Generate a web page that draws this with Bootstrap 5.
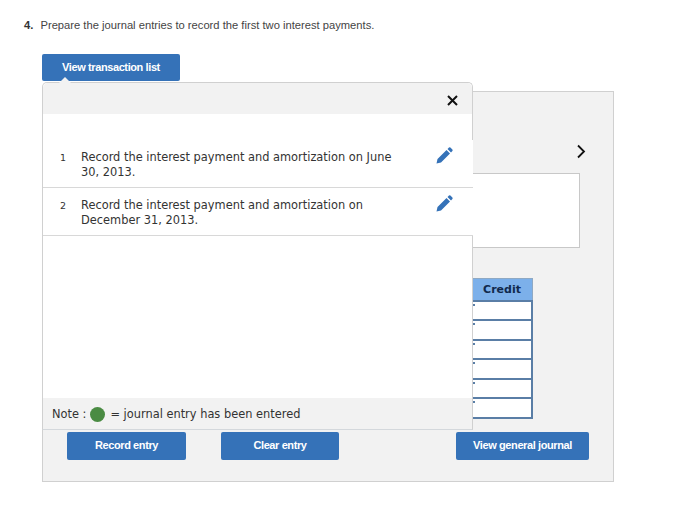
<!DOCTYPE html>
<html lang="en">
<head>
    <meta charset="UTF-8">
    <meta name="viewport" content="width=device-width, initial-scale=1.0">
    <title>Journal entries</title>
    <link href="https://cdn.jsdelivr.net/npm/bootstrap@5.3.0/dist/css/bootstrap.min.css" rel="stylesheet">
    <style>
        body {
            background-color: #fff;
            font-family: "Liberation Sans", Arial, sans-serif;
            color: #444;
            height: 528px;
            overflow: hidden;
        }
        .page-wrap {
            padding: 18px 0 0 24px;
            width: 700px;
        }
        .question {
            font-size: 11.2px;
            line-height: 15px;
            margin: 0 0 21px 0;
        }
        .question b { color: #333; margin-right: 4px; }
        .work-area {
            position: relative;
            margin-left: 18px;
            width: 572px;
        }
        .btn-blue {
            background-color: #3572b8;
            color: #fff;
            border: 0;
            border-radius: 2px;
            font-size: 11px;
            font-weight: 700;
            letter-spacing: -.4px;
            height: 28px;
            padding: 0 0 1px 0;
        }
        .btn-blue:hover { background-color: #3572b8; color: #fff; }
        .btn-list { width: 138px; height: 27px; display: block; }
        .panel-main {
            margin-top: 10px;
            height: 391px;
            background-color: #f2f2f2;
            border: 1px solid #d0d0d0;
            padding: 0 24px 0 24px;
        }
        .next-row {
            height: 81px;
            padding: 52px 3px 0 0;
        }
        .white-box {
            height: 75px;
            background-color: #fff;
            border: 1px solid #c8c8c8;
            margin-right: 9px;
        }
        .entry-table {
            width: 300px;
            margin: 30px 56px 0 auto;
            border-collapse: collapse;
            table-layout: fixed;
        }
        .entry-table th {
            height: 22px;
            background-color: #7cb0ea;
            border: 1px solid #8fa9c4;
            color: #10294d;
            font-family: "DejaVu Sans", sans-serif;
            font-size: 11px;
            font-weight: 700;
            text-align: center;
            padding: 1px 0 0 0;
        }
        .entry-table th.blank-col {
            width: 239px;
            border: 0;
            background: none;
        }
        .entry-table td {
            position: relative;
            height: 19.6px;
            background-color: #fff;
            border: 2px solid #5a7ea6;
            border-left: 0;
            padding: 0;
        }
        .entry-table td:first-child { border-right: 0; }
        .entry-table td:last-child::before {
            content: "";
            position: absolute;
            left: 1px;
            top: 2px;
            width: 2px;
            height: 2px;
            background-color: #5a7ea6;
        }
        .action-row {
            margin-top: 13px;
            margin-right: 0;
        }
        .btn-record { width: 119px; }
        .btn-clear { width: 118px; margin-left: 35px; }
        .btn-journal { width: 133px; margin-left: auto; }
        .popup {
            position: absolute;
            left: 0;
            top: 28px;
            width: 431px;
            height: 348px;
            background-color: #fff;
            border: 1px solid #d0d0d0;
            border-bottom-color: #d4d8dc;
            border-radius: 5px 5px 0 0;
            display: flex;
            flex-direction: column;
            font-family: "DejaVu Sans", sans-serif;
            color: #333;
        }
        .popup::before {
            content: "";
            position: absolute;
            left: 16px;
            top: -6px;
            border-left: 6px solid transparent;
            border-right: 6px solid transparent;
            border-bottom: 6px solid #f2f2f2;
        }
        .popup-head {
            height: 31px;
            background-color: #f2f2f2;
            border-radius: 5px 5px 0 0;
            padding: 0 14px 0 0;
        }
        .popup-list {
            margin-top: 26px;
            flex: 1 1 auto;
        }
        .popup-item {
            display: flex;
            height: 48px;
            padding: 10px 0 0 17px;
            border-bottom: 1px solid #d8d8d8;
            font-size: 11.4px;
            line-height: 15px;
            margin-right: -1px;
            background-color: #fff;
        }
        .item-num { width: 21px; font-size: 9.5px; flex: none; }
        .item-text { width: 325px; flex: none; }
        .item-edit { margin-left: 30px; margin-top: -3px; }
        .popup-note {
            height: 31px;
            background-color: #f2f2f2;
            font-size: 11.4px;
            padding: 2px 0 0 9px;
        }
        .green-dot {
            width: 15px;
            height: 15px;
            border-radius: 50%;
            background-color: #4a8b43;
            margin: -1px 5px 0 4px;
        }
    </style>
</head>
<body>
    <div class="page-wrap">
        <p class="question"><b>4.</b> Prepare the journal entries to record the first two interest payments.</p>

        <div class="work-area">
            <button class="btn btn-blue btn-list">View transaction list</button>

            <div class="panel-main">
                <div class="next-row d-flex justify-content-end">
                    <svg width="10" height="15" viewBox="0 0 10 15"><path d="M2 1.5 L8 7.5 L2 13.5" fill="none" stroke="#111" stroke-width="1.8"/></svg>
                </div>
                <div class="white-box"></div>
                <table class="entry-table">
                    <thead>
                        <tr><th class="blank-col"></th><th>Credit</th></tr>
                    </thead>
                    <tbody>
                        <tr><td></td><td></td></tr>
                        <tr><td></td><td></td></tr>
                        <tr><td></td><td></td></tr>
                        <tr><td></td><td></td></tr>
                        <tr><td></td><td></td></tr>
                        <tr><td></td><td></td></tr>
                    </tbody>
                </table>
                <div class="action-row d-flex">
                    <button class="btn btn-blue btn-record">Record entry</button>
                    <button class="btn btn-blue btn-clear">Clear entry</button>
                    <button class="btn btn-blue btn-journal">View general journal</button>
                </div>
            </div>

            <div class="popup">
                <div class="popup-head d-flex justify-content-end align-items-center">
                    <svg width="11" height="11" viewBox="0 0 11 11" class="mt-1"><path d="M1 1 L10 10 M10 1 L1 10" stroke="#111" stroke-width="2"/></svg>
                </div>
                <div class="popup-list">
                    <div class="popup-item">
                        <span class="item-num">1</span>
                        <span class="item-text">Record the interest payment and amortization on June 30, 2013.</span>
                        <svg class="item-edit" width="17" height="17" viewBox="0 0 17 17"><path d="M0.5 16.5 L1.5 12 L10.5 3 L14 6.5 L5 15.5 Z M11.5 2 L13 0.6 Q13.7 0 14.4 0.6 L16.4 2.6 Q17 3.3 16.4 4 L15 5.5 Z" fill="#3572b8"/></svg>
                    </div>
                    <div class="popup-item">
                        <span class="item-num">2</span>
                        <span class="item-text">Record the interest payment and amortization on December 31, 2013.</span>
                        <svg class="item-edit" width="17" height="17" viewBox="0 0 17 17"><path d="M0.5 16.5 L1.5 12 L10.5 3 L14 6.5 L5 15.5 Z M11.5 2 L13 0.6 Q13.7 0 14.4 0.6 L16.4 2.6 Q17 3.3 16.4 4 L15 5.5 Z" fill="#3572b8"/></svg>
                    </div>
                </div>
                <div class="popup-note d-flex align-items-center">
                    <span>Note :</span><span class="green-dot"></span><span>= journal entry has been entered</span>
                </div>
            </div>
        </div>
    </div>
    <script src="https://cdn.jsdelivr.net/npm/bootstrap@5.3.0/dist/js/bootstrap.bundle.min.js"></script>
</body>
</html>
